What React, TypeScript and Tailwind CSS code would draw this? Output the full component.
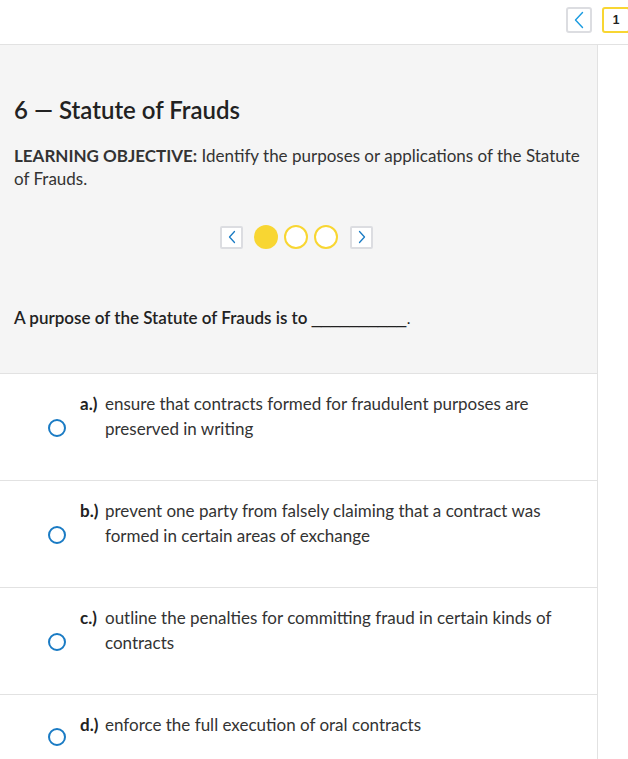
const options = [
  { label: 'a.)', text: 'ensure that contracts formed for fraudulent purposes are preserved in writing' },
  { label: 'b.)', text: 'prevent one party from falsely claiming that a contract was formed in certain areas of exchange' },
  { label: 'c.)', text: 'outline the penalties for committing fraud in certain kinds of contracts' },
  { label: 'd.)', text: 'enforce the full execution of oral contracts' },
]

function Chevron({ dir }: { dir: 'left' | 'right' }) {
  return (
    <svg width="10" height="14" viewBox="0 0 10 14" fill="none">
      <path
        d={dir === 'left' ? 'M7.5 1.5L2.5 7l5 5.5' : 'M2.5 1.5L7.5 7l-5 5.5'}
        stroke="#1a7bc4"
        strokeWidth="1.3"
        strokeLinecap="round"
        strokeLinejoin="round"
      />
    </svg>
  )
}

export default function App() {
  return (
    <div className="w-[628px] h-[759px] overflow-hidden bg-white text-[#333] font-['Lato',sans-serif]">
      {/* top bar */}
      <div className="h-[45px] border-b border-[#e2e2e2] flex items-start justify-end pt-[7px] gap-[10px]">
        <button className="w-[26px] h-[26px] rounded-[3px] border-2 border-[#dcdde1] bg-white flex items-center justify-center">
          <svg width="12" height="18" viewBox="0 0 12 18" fill="none">
            <path d="M9.5 1.5L2.5 9l7 7.5" stroke="#1a9be0" strokeWidth="1.4" strokeLinecap="round" strokeLinejoin="round" />
          </svg>
        </button>
        <div className="w-[28px] h-[26px] mr-[-2px] rounded-[3px] border-2 border-[#f8d632] bg-white flex items-center justify-center text-[12px] font-bold text-[#222] font-['Liberation_Sans',sans-serif]">
          1
        </div>
      </div>

      <div className="flex">
        <div className="w-[598px] border-r border-[#e2e2e2]">
          {/* header section */}
          <div className="bg-[#f5f5f5] border-b border-[#e2e2e2] px-[14px] pt-[51px] pb-[44px]">
            <h1 className="text-[24px] font-semibold text-[#222] leading-[28px]">6 — Statute of Frauds</h1>
            <div className="mt-[20px] text-[17px] leading-[23px] text-[#333]">
              <b className="font-bold">LEARNING OBJECTIVE:</b> Identify the purposes or applications of the Statute of Frauds.
            </div>
            <div className="mt-[35px] flex items-center justify-center gap-[11px] pr-[4px]">
              <button className="w-[23px] h-[23px] rounded-[2px] border-2 border-[#dcdde1] bg-white flex items-center justify-center">
                <Chevron dir="left" />
              </button>
              <div className="flex items-center gap-[6px]">
                <span className="w-[24px] h-[24px] rounded-full bg-[#f8d632]" />
                <span className="w-[24px] h-[24px] rounded-full border-2 border-[#f8d632] bg-white" />
                <span className="w-[24px] h-[24px] rounded-full border-2 border-[#f8d632] bg-white" />
              </div>
              <button className="w-[23px] h-[23px] ml-[1px] rounded-[2px] border-2 border-[#dcdde1] bg-white flex items-center justify-center">
                <Chevron dir="right" />
              </button>
            </div>
            <p className="mt-[59px] text-[17px] font-semibold text-[#222] leading-[20px]">
              A purpose of the Statute of Frauds is to{' '}
              <span className="font-normal font-['Liberation_Sans',sans-serif]">__________.</span>
            </p>
          </div>

          {/* options */}
          {options.map((o) => (
            <div key={o.label} className="h-[107px] border-b border-[#e2e2e2] pt-[17px]">
              <div className="flex items-center">
                <div className="w-[80px] shrink-0 pl-[48px] translate-y-[12px]">
                  <span className="block w-[18px] h-[18px] rounded-full border-2 border-[#1a7bc4] bg-white" />
                </div>
                <div className="flex flex-1 pr-[40px] text-[17px] leading-[25px]">
                  <span className="w-[25px] shrink-0 font-bold text-[#222]">{o.label}</span>
                  <span className="text-[#333]">{o.text}</span>
                </div>
              </div>
            </div>
          ))}
        </div>
        <div className="flex-1" />
      </div>
    </div>
  )
}
